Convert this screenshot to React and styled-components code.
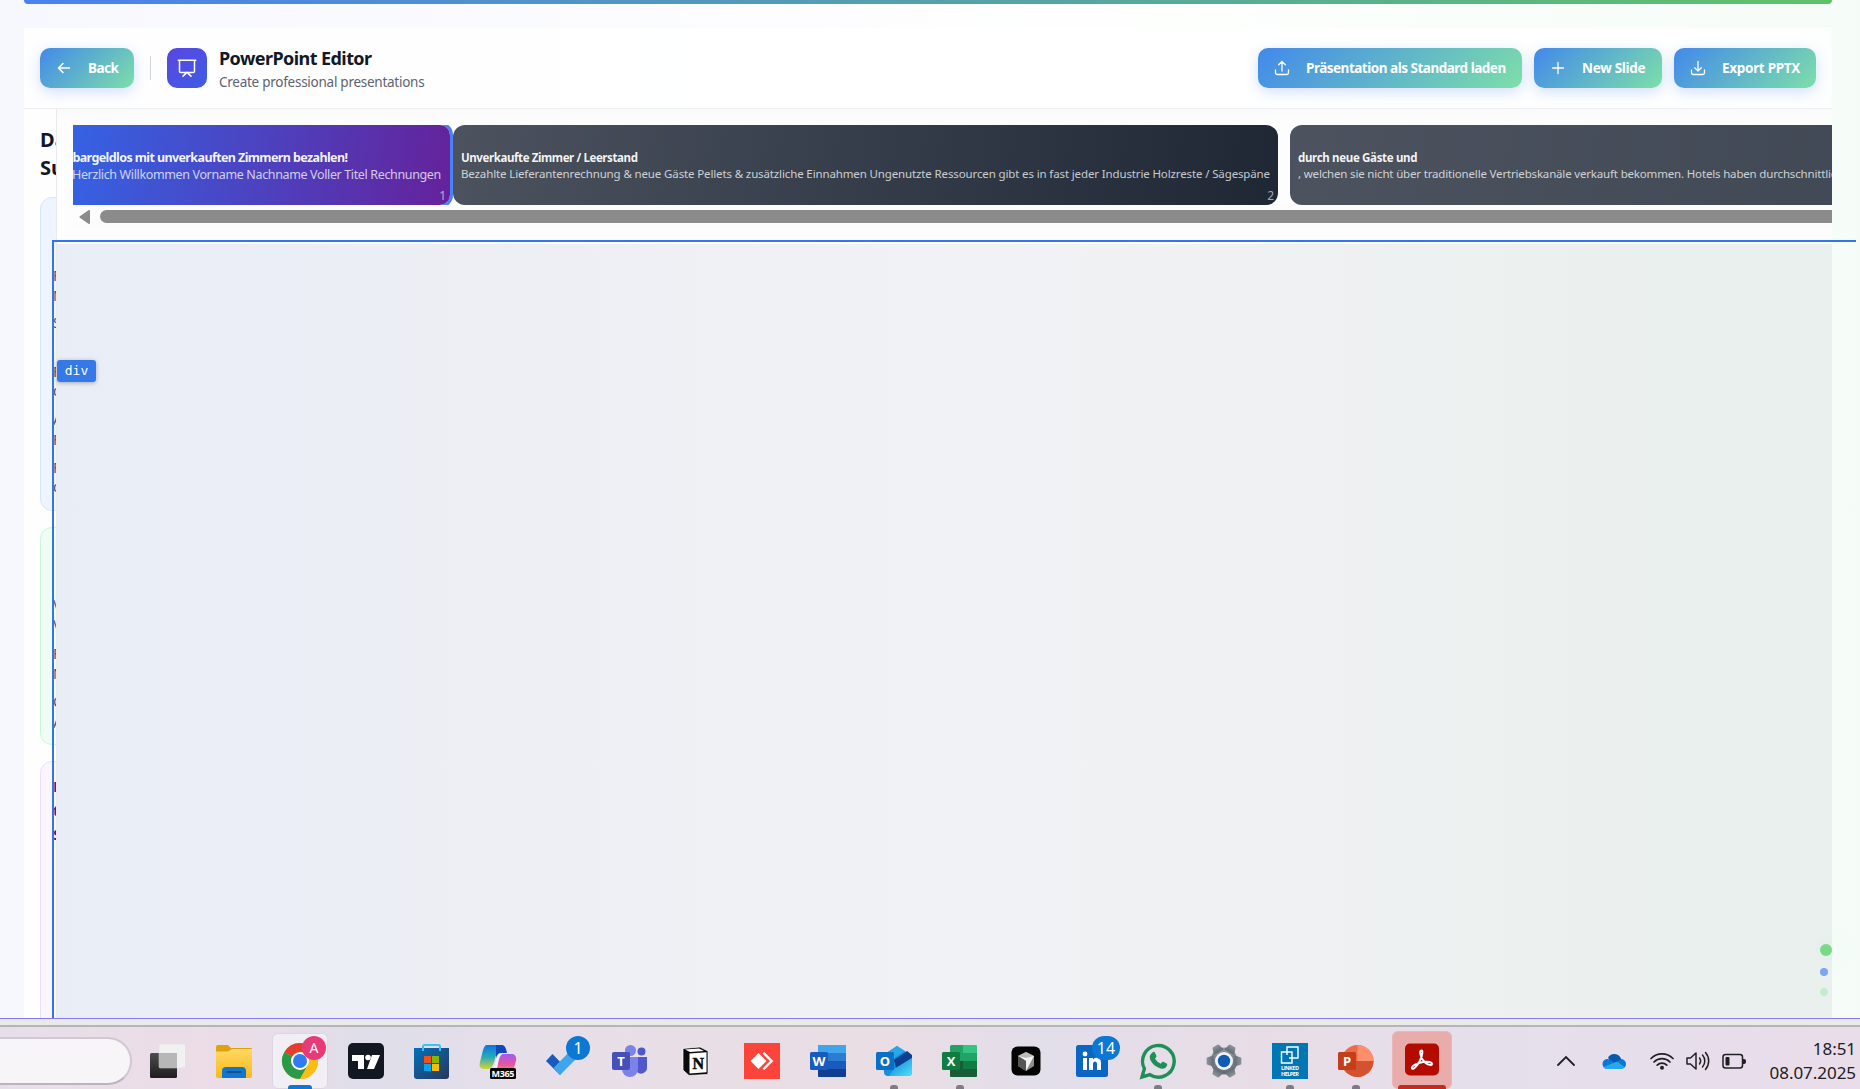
import React from "react";
import styled, { createGlobalStyle } from "styled-components";

const Global = createGlobalStyle`
  *, *::before, *::after { box-sizing: border-box; }
  body { margin: 0; overflow: hidden; font-family: "Noto Sans", "Open Sans", sans-serif; }
  svg { display: block; flex: none; }
`;

const Screen = styled.div`
  position: relative;
  width: 1860px;
  height: 1089px;
  display: flex;
  flex-direction: column;
  overflow: hidden;
`;
const Page = styled.div`
  height: 1018px;
  padding: 0 28px 0 24px;
  display: flex;
  flex-direction: column;
  background: linear-gradient(90deg, #f7f8fe 0%, #fdfdff 45%, #fdfffd 62%, #f5fcf7 100%);
`;
const TopBar = styled.div`
  height: 4px;
  flex: none;
  margin-bottom: 24px;
  border-radius: 0 0 4px 4px;
  background: linear-gradient(90deg, #4b80f0, #5fc268);
`;
const Header = styled.header`
  height: 81px;
  flex: none;
  display: flex;
  align-items: center;
  padding: 0 16px;
  background: rgba(255, 255, 255, 0.8);
  border-bottom: 1px solid #edeef1;
`;
const Button = styled.button`
  height: 40px;
  width: ${(p) => p.$w}px;
  display: flex;
  align-items: center;
  gap: 16px;
  padding: 0 0 0 16px;
  border: 0;
  border-radius: 10px;
  color: #fff;
  font: 700 13.5px/20px "Noto Sans", sans-serif;
  letter-spacing: ${(p) => p.$ls}px;
  white-space: nowrap;
  background: linear-gradient(135deg, #4289eb, #7ddfa9);
  box-shadow: 0 4px 14px rgba(66, 120, 240, 0.24);
`;
const Divider = styled.div`
  width: 1px;
  height: 24px;
  margin: 0 16px;
  background: #d1d5db;
`;
const LogoTile = styled.div`
  width: 40px;
  height: 40px;
  display: grid;
  place-items: center;
  border-radius: 10px;
  background: linear-gradient(135deg, #5a46e2, #3f5ce4);
`;
const Heading = styled.div`
  display: flex;
  flex-direction: column;
  margin-left: 12px;
  padding-top: 2px;
  flex: 1;
`;
const Title = styled.h1`
  margin: 0;
  font-size: 18px;
  line-height: 25px;
  font-weight: 700;
  letter-spacing: -0.57px;
  color: #111827;
`;
const Subtitle = styled.p`
  margin: 0;
  font-size: 13.5px;
  line-height: 22px;
  letter-spacing: -0.26px;
  color: #5b6472;
`;
const Actions = styled.div`
  display: flex;
  gap: 12px;
`;
const Body = styled.div`
  flex: 1;
  min-height: 0;
  display: flex;
`;
const Sidebar = styled.aside`
  width: 33px;
  flex: none;
  overflow: hidden;
  padding: 14px 0 0 16px;
  background: rgba(255, 255, 255, 0.85);
  border-right: 1px solid #e9eaee;
`;
const SideTitle = styled.h2`
  margin: 0 0 15px;
  font-size: 20px;
  line-height: 28px;
  font-weight: 700;
  color: #111827;
  width: 60px;
  padding-top: 3px;
`;
const tones = {
  blue: ["#eff5ff", "#d6e6fd", "#4b5563"],
  green: ["#f0fdf5", "#ccf5db", "#4b5563"],
  purple: ["#faf5fe", "#ecdffc", "#581c87"],
};
const SideCard = styled.section`
  width: 260px;
  height: ${(p) => p.$h}px;
  margin-bottom: 16px;
  border: 1px solid ${(p) => tones[p.$tone][1]};
  border-radius: 12px;
  background: ${(p) => tones[p.$tone][0]};
  color: ${(p) => tones[p.$tone][2]};
  padding-left: 12px;
`;
const SideLine = styled.div`
  height: 16px;
  margin-top: ${(p) => p.$mt}px;
  font-size: ${(p) => (p.$bold ? 15 : 14)}px;
  font-weight: ${(p) => (p.$bold ? 700 : 400)};
  line-height: 16px;
`;
const Main = styled.main`
  flex: 1;
  min-width: 0;
  display: flex;
  flex-direction: column;
`;
const Strip = styled.div`
  height: 135px;
  flex: none;
  padding: 16px 0 0 16px;
  background: linear-gradient(#f9fafa, #fdfdfe 14px);
`;
const Slides = styled.div`
  height: 80px;
  display: flex;
  overflow: hidden;
`;
const Slide = styled.article`
  flex: none;
  position: relative;
  width: ${(p) => p.$w}px;
  height: 80px;
  padding: ${(p) => (p.$active ? "24px 0 0 0" : "24px 0 0 8px")};
  margin-right: ${(p) => (p.$active ? 3 : 12)}px;
  border-radius: ${(p) => (p.$active ? "0 10px 10px 0" : "12px")};
  background: ${(p) => (p.$active ? "linear-gradient(97deg, #3562e3, #64229b)" : "linear-gradient(97deg, #4c535f, " + p.$to + ")")};
  box-shadow: ${(p) => (p.$active ? "0 0 0 3px #4a82f2" : "none")};
  color: #fff;
  white-space: nowrap;
`;
const SlideTitle = styled.div`
  font-size: ${(p) => p.$fs}px;
  line-height: 17px;
  font-weight: 700;
  letter-spacing: ${(p) => p.$ls}px;
  text-indent: ${(p) => p.$indent || 0}px;
  color: rgba(255, 255, 255, 0.95);
`;
const SlideText = styled.div`
  font-size: ${(p) => p.$fs}px;
  line-height: ${(p) => p.$lh || 16}px;
  letter-spacing: ${(p) => p.$ls}px;
  text-indent: ${(p) => p.$indent || 0}px;
  color: rgba(255, 255, 255, 0.75);
`;
const SlideNumber = styled.span`
  position: absolute;
  right: 4px;
  bottom: 1px;
  font-size: 12px;
  line-height: 16px;
  color: rgba(255, 255, 255, 0.6);
`;
const ScrollTrack = styled.div`
  height: 23px;
  display: flex;
  align-items: center;
  padding: 0 0 0 6px;
  gap: 10px;
  background: #fcfcfc;
`;
const ScrollThumb = styled.div`
  flex: 1;
  height: 13px;
  border-radius: 7px 0 0 7px;
  background: #8b8b8b;
`;
const Canvas = styled.div`
  flex: 1;
  background: linear-gradient(90deg, #e9edf6 0%, #edeff4 28%, #f1f2f5 50%, #eff1f2 68%, #ebf0ee 88%, #eaf0ee 100%);
`;
const Highlight = styled.div`
  position: absolute;
  left: 52px;
  top: 240px;
  width: 1804px;
  height: 778px;
  border: solid #3277ea;
  border-width: 2px 0 0 2px;
`;
const Tag = styled.div`
  position: absolute;
  left: 57px;
  top: 360px;
  width: 39px;
  height: 22px;
  border-radius: 3px;
  background: #3578e8;
  color: #fff;
  font: 13px/21px "DejaVu Sans Mono", monospace;
  text-align: center;
  box-shadow: 0 1px 4px rgba(0, 0, 0, 0.3);
`;
const Dots = styled.div`
  position: absolute;
  left: 1820px;
  top: 944px;
  display: flex;
  flex-direction: column;
  gap: 12px;
`;
const Dot = styled.i`
  width: ${(p) => p.$s}px;
  height: ${(p) => p.$s}px;
  border-radius: 50%;
  background: ${(p) => p.$c};
  box-shadow: ${(p) => (p.$glow ? "0 0 24px rgba(110,215,140,.18)" : "none")};
`;
const WindowEdge = styled.div`
  height: 9px;
  flex: none;
  border-top: 1px solid #8878f0;
  border-bottom: 2px solid #b6b4b6;
  background: #e9ebeb;
`;
const Taskbar = styled.footer`
  height: 62px;
  display: flex;
  background: linear-gradient(90deg, #e6dfea 0%, #ecdde7 11%, #dfdeea 20%, #e7dfe8 30%, #eadde4 48%, #e2deea 56%, #e8dde6 68%, #e5dfec 80%, #eaddea 100%);
`;
const SearchPill = styled.div`
  width: 132px;
  height: 48px;
  margin: 10px 3px 0 0;
  border: 2px solid #d0c8d3;
  border-left: 0;
  border-bottom-color: #bbb4be;
  border-radius: 0 24px 24px 0;
  background: #f7f5f8;
`;
const TaskCell = styled.div`
  position: relative;
  width: 66px;
  height: 62px;
  flex: none;
  display: flex;
  justify-content: center;
  padding-top: 16px;
`;
const ActiveTile = styled.div`
  position: absolute;
  left: ${(p) => (p.$red ? 3 : 5)}px;
  right: ${(p) => (p.$red ? 3 : 5)}px;
  top: ${(p) => (p.$red ? 4 : 6)}px;
  bottom: 0;
  border-radius: 6px;
  background: ${(p) => (p.$red ? "#e8adab" : "#f1eff5")};
  border: 1px solid ${(p) => (p.$red ? "#ebb6b5" : "#dcd6e2")};
`;
const Underline = styled.div`
  position: absolute;
  bottom: 0;
  left: ${(p) => 33 - p.$w / 2}px;
  width: ${(p) => p.$w}px;
  height: 4px;
  border-radius: 3px 3px 0 0;
  background: ${(p) => p.$c};
`;
const Badge = styled.span`
  position: absolute;
  left: ${(p) => p.$x}px;
  top: 9px;
  width: ${(p) => p.$w || 24}px;
  height: 24px;
  border-radius: 12px;
  background: ${(p) => p.$c};
  color: #fff;
  font-size: ${(p) => p.$fs || 16}px;
  line-height: 24px;
  text-align: center;
`;
const Icon = styled.svg`
  position: relative;
  width: 36px;
  height: 36px;
  overflow: visible;
  font-family: "Open Sans", "Noto Sans", sans-serif;
`;
const Tray = styled.div`
  flex: 1;
  display: flex;
  align-items: flex-start;
  padding: 22px 4px 0 0;
  justify-content: flex-end;
`;
const TrayIcon = styled.svg`
  width: 24px;
  height: 24px;
  margin-right: ${(p) => p.$mr}px;
`;
const Clock = styled.div`
  width: 86px;
  margin-top: -12px;
  display: flex;
  flex-direction: column;
  align-items: flex-end;
  font: 17px/24px "Noto Sans", sans-serif;
  letter-spacing: -0.05px;
  color: #202024;
  white-space: nowrap;
`;

const Stroke = ({ size = 16, w = 1.5, children }) => (
  <svg width={size} height={size} viewBox="0 0 16 16" fill="none" stroke="#fff" strokeWidth={w} strokeLinecap="round" strokeLinejoin="round">
    {children}
  </svg>
);

function AppCell({ children, tile, under, badge }) {
  return (
    <TaskCell>
      {tile && <ActiveTile $red={tile === "red"} />}
      <Icon viewBox="0 0 36 36">{children}</Icon>
      {badge}
      {under && <Underline $w={under === "blue" ? 24 : under === "red" ? 48 : 8} $c={under === "blue" ? "#0a78d4" : under === "red" ? "#c42b1c" : "#7f7b84"} />}
    </TaskCell>
  );
}

function TaskApps() {
  return (
    <>
      <AppCell>
        <defs>
          <linearGradient id="tvk" x1="0" y1="0" x2="0" y2="1"><stop offset="0" stopColor="#4c4c4c" /><stop offset="1" stopColor="#1e1e1e" /></linearGradient>
          <linearGradient id="fold" x1="0" y1="0" x2="0" y2="1"><stop offset="0" stopColor="#ffd965" /><stop offset="1" stopColor="#f8b919" /></linearGradient>
          <linearGradient id="store" x1="0" y1="0" x2="1" y2="1"><stop offset="0" stopColor="#066fbd" /><stop offset="1" stopColor="#253859" /></linearGradient>
          <linearGradient id="cpA" x1="0" y1="0" x2="0" y2="1"><stop offset="0" stopColor="#0b75e3" /><stop offset=".5" stopColor="#26abb8" /><stop offset="1" stopColor="#d6d336" /></linearGradient>
          <linearGradient id="cpB" x1="0" y1="0" x2="0" y2="1"><stop offset="0" stopColor="#a05bee" /><stop offset=".6" stopColor="#e654a2" /><stop offset="1" stopColor="#fb8d62" /></linearGradient>
          <linearGradient id="ol" x1="0" y1="0" x2="1" y2="1"><stop offset="0" stopColor="#1477ce" /><stop offset="1" stopColor="#4de3ff" /></linearGradient>
          <linearGradient id="steel" x1="0" y1="0" x2="0" y2="1"><stop offset="0" stopColor="#8d959d" /><stop offset="1" stopColor="#636c76" /></linearGradient>
        </defs>
        <rect x="0" y="10" width="27" height="25" rx="1.5" fill="url(#tvk)" />
        <rect x="9" y="1" width="26.5" height="24" rx="1.5" fill="#f1f1f1" stroke="#d9d9da" strokeWidth=".5" />
        <rect x="9" y="10" width="18" height="15" fill="#b7b7b7" />
      </AppCell>
      <AppCell>
        <path d="M0 4a2 2 0 0 1 2-2h10l3 3h20a1 1 0 0 1 1 1v5H0z" fill="#e0a10c" />
        <path d="M0 8.500h12l4-2.500h20v27a2 2 0 0 1-2 2H2a2 2 0 0 1-2-2z" fill="url(#fold)" />
        <path d="M6 35v-7a4 4 0 0 1 4-4h16a4 4 0 0 1 4 4v7z" fill="#0d78cc" />
        <path d="M11.500 29h13" stroke="#114f93" strokeWidth="1.800" strokeLinecap="round" />
      </AppCell>
      <AppCell tile="light" under="blue" badge={<Badge $x={35} $c="#e93a78" $fs={14}>A</Badge>}>
        <circle cx="18" cy="18" r="18" fill="#fdbd10" />
        <path d="M18 18L2.410 9A18 18 0 0 1 33.600 9H18z" fill="#e43d30" />
        <path d="M2.410 9A18 18 0 0 0 18 36l7.800-13.500L18 18z" fill="#2a9a48" />
        <path d="M18 9h15.600A18 18 0 0 1 18 36l7.800-13.500z" fill="#fdbd10" />
        <circle cx="18" cy="18" r="9" fill="#fff" />
        <circle cx="18" cy="18" r="7" fill="#2f7cf0" />
      </AppCell>
      <AppCell>
        <rect width="36" height="36" rx="5" fill="#131722" />
        <path d="M4 12h12v14h-6v-8H4zM24 12h8l-6 14h-7z" fill="#fff" />
        <circle cx="20" cy="14.500" r="2.800" fill="#fff" />
      </AppCell>
      <AppCell>
        <path d="M9 7V3.500A1.500 1.500 0 0 1 10.500 2h14A1.500 1.500 0 0 1 26 3.500V7" fill="none" stroke="#38c4f2" strokeWidth="2" />
        <path d="M0 5h35v28a3 3 0 0 1-3 3H3a3 3 0 0 1-3-3z" fill="url(#store)" />
        <path d="M9 5v3M26 5v3" stroke="#38c4f2" strokeWidth="2" />
        <path d="M10 13h7v7h-7z" fill="#f1511b" /><path d="M18 13h7v7h-7z" fill="#80b900" />
        <path d="M10 21h7v7h-7z" fill="#05a6f0" /><path d="M18 21h7v7h-7z" fill="#fbbc09" />
      </AppCell>
      <AppCell>
        <path d="M7 2h15c-5 2-5 8-7 14-2 7-4 10-7 10H4c-4 0-5-3-4-7L3 7c1-3 2-5 4-5z" fill="url(#cpA)" />
        <path d="M16 2h6c2 0 4 2 5 8h-6c-3 0-4 2-5 5z" fill="#1248ba" />
        <path d="M21 11h11c3 0 5 3 4 7l-3 10H13c4 0 4-5 5-10 1-4 1-7 3-7z" fill="url(#cpB)" />
        <path d="M20 11c-3 0-5 12-7 15h4c1-4 2-15 6-15z" fill="#f4effa" />
        <rect x="10" y="25" width="26" height="11" rx="1.500" fill="#080808" />
        <text x="23" y="34" fontSize="9" fontWeight="700" fill="#fff" textAnchor="middle" textLength="23">M365</text>
      </AppCell>
      <AppCell badge={<Badge $x={35} $c="#0a78d4">1</Badge>}>
        <path d="M0 18l6.500-7L20 25l-6 7z" fill="#185abd" />
        <path d="M7.500 25L27 5l7 7-20 20z" fill="#41a5ee" />
      </AppCell>
      <AppCell>
        <circle cx="18.500" cy="7.500" r="5.500" fill="#7b83eb" /><circle cx="29.500" cy="8.500" r="4" fill="#5059c9" />
        <path d="M23 14h12v10a6 6 0 0 1-10 5z" fill="#5059c9" />
        <path d="M10 14h16v12a8 8 0 0 1-16 0z" fill="#7b83eb" />
        <rect y="9" width="18" height="18" rx="2" fill="#4650b8" />
        <text x="9" y="23" fontSize="13" fontWeight="700" fill="#fff" textAnchor="middle">T</text>
      </AppCell>
      <AppCell>
        <path d="M5 5.500L22 4l8 4v22a1.500 1.500 0 0 1-1.500 1.500L11 32.500l-6-5.500z" fill="#0a0a0a" stroke="#fff" strokeWidth=".7" />
        <path d="M7 6.500L21 5.500l5 2.500-14 1z" fill="#fff" />
        <path d="M11.500 10.500l17-1.200v20l-17 1.200z" fill="#fff" />
        <text x="20.200" y="25.600" fontSize="16" fontWeight="700" fill="#0a0a0a" textAnchor="middle" fontFamily="Liberation Serif, serif" stroke="#0a0a0a" strokeWidth=".5">N</text>
      </AppCell>
      <AppCell>
        <rect width="36" height="36" fill="#fd443a" />
        <path d="M14.500 10l8 8-8 8-8-8z" fill="#fff" /><path d="M18.500 10.500l1.800-1.500 9 9-9 9-1.800-1.500 7.500-7.500z" fill="#fff" />
      </AppCell>
      <AppCell>
        <rect x="8" y="2" width="28" height="32" rx="1.500" fill="#185abd" />
        <path d="M8 3.500A1.500 1.500 0 0 1 9.500 2h25A1.500 1.500 0 0 1 36 3.500V10H8z" fill="#41a5ee" /><path d="M8 10h28v8H8z" fill="#2b7cd3" /><path d="M8 26h28v6.500a1.500 1.500 0 0 1-1.500 1.500h-25A1.500 1.500 0 0 1 8 32.500z" fill="#103f91" />
        <rect y="9" width="18" height="18" rx="1.500" fill="#185abd" />
        <text x="9" y="22.500" fontSize="13" fontWeight="700" fill="#fff" textAnchor="middle" textLength="13" lengthAdjust="spacingAndGlyphs">W</text>
      </AppCell>
      <AppCell under="dot">
        <path d="M6 13L21 3l15 10v16a4 4 0 0 1-4 4H12a4 4 0 0 1-4-4z" fill="#1490df" />
        <path d="M7 12L21 3l8 5-17 11z" fill="#28a8ea" /><path d="M18 17l13-9 5 4v3L20 25z" fill="#0a3f91" />
        <path d="M36 15v14a4 4 0 0 1-4 4H13l5-7z" fill="url(#ol)" />
        <rect y="9" width="18" height="18" rx="1.500" fill="#0b6fc6" />
        <text x="9" y="22.500" fontSize="13" fontWeight="700" fill="#fff" textAnchor="middle">O</text>
      </AppCell>
      <AppCell under="dot">
        <rect x="8" y="2" width="27" height="32" rx="1.500" fill="#21a366" />
        <path d="M21 2h12.500A1.500 1.500 0 0 1 35 3.500V10H21z" fill="#33c481" /><path d="M8 18h13v8H8z" fill="#185c37" /><path d="M21 18h14v8H21z" fill="#107c41" /><path d="M8 26h27v6.500a1.500 1.500 0 0 1-1.500 1.500h-24A1.500 1.500 0 0 1 8 32.500z" fill="#185c37" />
        <rect y="9" width="18" height="18" rx="1.500" fill="#107c41" />
        <text x="9" y="22.500" fontSize="13" fontWeight="700" fill="#fff" textAnchor="middle">X</text>
      </AppCell>
      <AppCell>
        <rect x="3.500" y="3.500" width="29" height="29" rx="6" fill="#030303" />
        <path d="M18 9l8 4v10l-8 5-8-5V13z" fill="#8d8d8d" /><path d="M10 13h16l-8 15v-10z" fill="#f2f2f2" /><path d="M10 13l8 5v10l-8-5z" fill="#555" /><path d="M18 9l8 4-8 2-8-2z" fill="#bbb" />
      </AppCell>
      <AppCell badge={<Badge $x={33} $w={28} $c="#0a78d4">14</Badge>}>
        <rect x="2" y="2" width="32" height="32" rx="2.500" fill="#0a66c2" />
        <circle cx="11" cy="11" r="2.400" fill="#fff" /><path d="M9 15h4v12H9zM15 15h4v1.700c2-3 8-2.700 8 3V27h-4v-6c0-3.500-4-3.200-4 0v6h-4z" fill="#fff" />
      </AppCell>
      <AppCell under="dot">
        <path d="M2 34l2.400-8.300A15.800 15.800 0 1 1 10 31.700z" fill="none" stroke="#1f8f58" strokeWidth="3.400" />
        <path d="M12.500 9.500c1-1 2-.8 2.500.3l1.300 3c.3.900-.2 1.500-1.300 2.800 1.500 2.700 3.300 4.200 5.800 5.200 1.500-1.900 1.800-2.200 2.800-1.800l3 1.500c.8.400.7 1.200.3 2.200-1 2.500-3.500 3.500-6 2.800-5.800-1.500-10-6-11-10-.6-2.500.6-4.500 2.600-6z" fill="#1f8f58" />
      </AppCell>
      <AppCell>
        <g fill="url(#steel)">
          <circle cx="18" cy="18" r="13.500" />
          {[30, 90, 150, 210, 270, 330].map((a) => (
            <path key={a} d="M12.500 7.500l1.800-6q.3-.9 1.200-.9h5q.9 0 1.200.9l1.800 6z" transform={`rotate(${a} 18 18)`} />
          ))}
        </g>
        <circle cx="18" cy="18" r="9" fill="#f2f2f4" /><circle cx="18" cy="18" r="6.200" fill="#0d5cb6" />
      </AppCell>
      <AppCell under="dot">
        <rect width="36" height="36" fill="#0077b5" />
        <g fill="none" stroke="#fff" strokeWidth="1.400"><path d="M15 12V4h11v11h-9" /><path d="M9.500 9H20v11H9.500z" /></g>
        <text x="18" y="27" fontSize="5.500" fontWeight="700" fill="#fff" textAnchor="middle" textLength="18">LINKED</text>
        <text x="18" y="32.500" fontSize="5.500" fontWeight="700" fill="#fff" textAnchor="middle" textLength="18">HELPER</text>
      </AppCell>
      <AppCell under="dot">
        <circle cx="19.500" cy="18" r="16" fill="#ed6c47" /><path d="M19.500 2a16 16 0 0 1 16 16h-16z" fill="#ff8f6b" /><path d="M3.500 18h32a16 16 0 0 1-32 0z" fill="#d35230" />
        <rect y="9" width="18" height="18" rx="1.500" fill="#c43e1c" />
        <text x="9" y="22.500" fontSize="13" fontWeight="700" fill="#fff" textAnchor="middle">P</text>
      </AppCell>
      <AppCell tile="red" under="red">
        <rect x="1" y="0.500" width="34" height="32" rx="5" fill="#b30b00" />
        <path d="M17 7.500c2-1 2 4-1 10-2.500 5-6.500 9.500-8 8-1.500-2 5-5.500 11-6.500 5-.8 9 .2 9 2 0 2-4 1-7-1.500-4-3.500-6-11-4-12z" fill="none" stroke="#fff" strokeWidth="1.900" />
      </AppCell>
    </>
  );
}

export default function App() {
  return (
    <>
      <Global />
      <Screen>
        <Page>
          <TopBar />
          <Header>
            <Button $w={94} $ls={-0.55}>
              <Stroke><path d="M13.500 8h-11M7 3.500L2.500 8 7 12.500" /></Stroke>
              Back
            </Button>
            <Divider />
            <LogoTile>
              <Stroke size={20} w={1.2}><path d="M1 1.800h14M2 1.800v8.700a1 1 0 0 0 1 1h10a1 1 0 0 0 1-1V1.800M8 11.500L4.800 14.500M8 11.500l3.200 3" /></Stroke>
            </LogoTile>
            <Heading>
              <Title>PowerPoint Editor</Title>
              <Subtitle>Create professional presentations</Subtitle>
            </Heading>
            <Actions>
              <Button $w={264} $ls={-0.49}>
                <Stroke w={1.3}><path d="M8 11V1.500M4.700 4.800L8 1.500l3.300 3.300M1.500 10v2.700A1.800 1.800 0 0 0 3.300 14.500h9.400a1.800 1.800 0 0 0 1.800-1.800V10" /></Stroke>
                Präsentation als Standard laden
              </Button>
              <Button $w={128} $ls={-0.3}>
                <Stroke w={1.3}><path d="M8 2.500v11M2.500 8h11" /></Stroke>
                New Slide
              </Button>
              <Button $w={142} $ls={-0.3}>
                <Stroke w={1.3}><path d="M8 1.500V11M4.700 7.700L8 11l3.300-3.300M1.500 10v2.700A1.800 1.800 0 0 0 3.300 14.500h9.400a1.800 1.800 0 0 0 1.800-1.800V10" /></Stroke>
                Export PPTX
              </Button>
            </Actions>
          </Header>
          <Body>
            <Sidebar>
              <SideTitle>Da<br />Su</SideTitle>
              <SideCard $tone="blue" $h={314}>
                <SideLine $mt={70}>F</SideLine>
                <SideLine $mt={4}>N</SideLine>
                <SideLine $mt={11}>S</SideLine>
                <SideLine $mt={33}>F</SideLine>
                <SideLine $mt={3}>d</SideLine>
                <SideLine $mt={13}>A</SideLine>
                <SideLine $mt={4}>F</SideLine>
                <SideLine $mt={12}>F</SideLine>
                <SideLine $mt={3}>d</SideLine>
              </SideCard>
              <SideCard $tone="green" $h={218}>
                <SideLine $mt={69}>V</SideLine>
                <SideLine $mt={4}>V</SideLine>
                <SideLine $mt={13}>F</SideLine>
                <SideLine $mt={4}>N</SideLine>
                <SideLine $mt={12}>C</SideLine>
                <SideLine $mt={5}>A</SideLine>
              </SideCard>
              <SideCard $tone="purple" $h={360}>
                <SideLine $bold $mt={16}>L</SideLine>
                <SideLine $bold $mt={8}>t</SideLine>
                <SideLine $bold $mt={8}>S</SideLine>
              </SideCard>
            </Sidebar>
            <Main>
              <Strip>
                <Slides>
                  <Slide $active $w={377}>
                    <SlideTitle $fs={12.5} $ls={-0.6} $indent={-0.6}>bargeldlos mit unverkauften Zimmern bezahlen!</SlideTitle>
                    <SlideText $fs={12.5} $ls={-0.36} $lh={18} $indent={-1}>Herzlich Willkommen Vorname Nachname Voller Titel Rechnungen</SlideText>
                    <SlideNumber>1</SlideNumber>
                  </Slide>
                  <Slide $w={825} $to="#1f2735">
                    <SlideTitle $fs={11.5} $ls={-0.4}>Unverkaufte Zimmer / Leerstand</SlideTitle>
                    <SlideText $fs={11.5} $ls={-0.13}>Bezahlte Lieferantenrechnung &amp; neue Gäste Pellets &amp; zusätzliche Einnahmen Ungenutzte Ressourcen gibt es in fast jeder Industrie Holzreste / Sägespäne</SlideText>
                    <SlideNumber>2</SlideNumber>
                  </Slide>
                  <Slide $w={1600} $to="#2f3745">
                    <SlideTitle $fs={11.5} $ls={-0.33}>durch neue Gäste und</SlideTitle>
                    <SlideText $fs={11.5} $ls={-0.17}>, welchen sie nicht über traditionelle Vertriebskanäle verkauft bekommen. Hotels haben durchschnittlich</SlideText>
                  </Slide>
                </Slides>
                <ScrollTrack>
                  <svg width="11" height="14" viewBox="0 0 11 14"><path d="M10 1v12L1.500 7z" fill="#8b8b8b" stroke="#8b8b8b" strokeWidth="2" strokeLinejoin="round" /></svg>
                  <ScrollThumb />
                </ScrollTrack>
              </Strip>
              <Canvas />
            </Main>
          </Body>
        </Page>
        <WindowEdge />
        <Taskbar>
          <SearchPill />
          <TaskApps />
          <Tray>
            <TrayIcon $mr={24} viewBox="0 0 24 24"><path d="M4 16l8-8 8 8" fill="none" stroke="#202024" strokeWidth="1.800" strokeLinecap="round" /></TrayIcon>
            <TrayIcon $mr={24} viewBox="0 0 24 24"><path d="M6 11a7 7 0 0 1 13-1 5 5 0 0 1 0 10H5A5 5 0 0 1 6 10z" fill="#0a78d4" /><path d="M6 9a7 7 0 0 1 13 1l-6 4z" fill="#0659b0" /><path d="M1.500 18L15 12.500 22.500 18a5 5 0 0 1-4 2H5.500a5 5 0 0 1-4-2z" fill="#28a8ea" /></TrayIcon>
            <TrayIcon $mr={12} viewBox="0 0 24 24"><g fill="none" stroke="#202024" strokeWidth="1.700" strokeLinecap="round"><path d="M1 9.500a15.500 15.500 0 0 1 22 0M4 13a11.300 11.300 0 0 1 16 0M7.200 16.200a6.800 6.800 0 0 1 9.600 0" /></g><circle cx="12" cy="18.800" r="2" fill="#202024" /></TrayIcon>
            <TrayIcon $mr={12} viewBox="0 0 24 24"><g fill="none" stroke="#202024" strokeWidth="1.500" strokeLinecap="round" strokeLinejoin="round"><path d="M1 9v6h3.500L10 20V4L4.500 9zM13.500 9a5 5 0 0 1 0 6M16.500 6a9 9 0 0 1 0 12M19.500 3.500a13 13 0 0 1 0 17" /></g></TrayIcon>
            <TrayIcon $mr={24} viewBox="0 0 24 24"><rect x="1" y="5.500" width="19.500" height="13.500" rx="2.500" fill="none" stroke="#202024" strokeWidth="1.500" /><rect x="3.500" y="8" width="4" height="8.500" rx="1" fill="#202024" /><path d="M21 10h1a2 2 0 0 1 2 2v1a2 2 0 0 1-2 2h-1z" fill="#202024" /></TrayIcon>
            <Clock><span>18:51</span><span>08.07.2025</span></Clock>
          </Tray>
        </Taskbar>
        <Highlight />
        <Tag>div</Tag>
        <Dots>
          <Dot $s={12} $c="#78d987" $glow />
          <Dot $s={8} $c="#7ca6f2" />
          <Dot $s={8} $c="#c0edcb" />
        </Dots>
      </Screen>
    </>
  );
}
